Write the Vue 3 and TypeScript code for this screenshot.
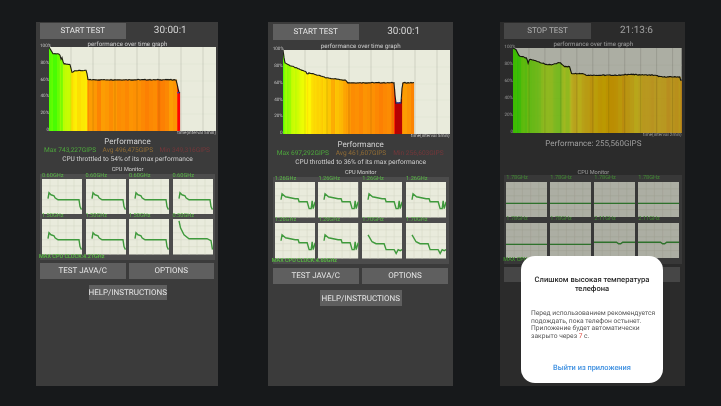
<script setup lang="ts">
type Pt = [number, number]

interface Chart {
  pts: Pt[]
  gridStep: number
  marks: Pt[]
}

interface Phone {
  id: string
  action: string
  timer: string
  chart: Chart
  interval: string
  stats?: { max: string; avg: string; min: string; note: string }
  score?: string
  freqs: string[]
  minis: string[]
  maxClock: string
  dialog?: boolean
}

const HUES: Pt[] = [[37, 0], [50, 2], [60, 31], [72, 56], [80, 76], [85, 90], [92, 100], [100, 106]]

function lerp(table: Pt[], x: number): number {
  if (x <= table[0][0]) return table[0][1]
  for (let i = 1; i < table.length; i++) {
    const [x0, y0] = table[i - 1]
    const [x1, y1] = table[i]
    if (x <= x1) return x1 === x0 ? y1 : y0 + ((y1 - y0) * (x - x0)) / (x1 - x0)
  }
  return table[table.length - 1][1]
}

function noise(n: number): number {
  const s = Math.sin(n * 12.9898) * 43758.5453
  return s - Math.floor(s) - 0.5
}

function bars(c: Chart) {
  const end = c.pts[c.pts.length - 1][0]
  const out: { x: number; y: number; h: number; fill: string }[] = []
  for (let x = 0; x < end; x++) {
    const v = lerp(c.pts, x + 0.5)
    const hue = Math.max(0, lerp(HUES, v) + noise(Math.floor(x / 4)) * 8)
    const light = v < 42 ? 36 : 50
    const h = (v / 100) * 84
    out.push({ x, y: 84 - h, h, fill: `hsl(${hue.toFixed(0)} 98% ${light}%)` })
  }
  return out
}

function outline(c: Chart): string {
  const end = c.pts[c.pts.length - 1][0]
  const out: string[] = []
  for (let x = 0; x <= end; x++) {
    const v = lerp(c.pts, x) + (x > 3 ? noise(x) * 0.9 : 0)
    out.push(`${x},${(84 - (v / 100) * 84).toFixed(1)}`)
  }
  return out.join(' ')
}

function gridX(step: number): number[] {
  const out: number[] = []
  for (let x = step; x < 167; x += step) out.push(x)
  return out
}

const a1 = '6,20 7,14 9,16 12,17 13,19 16,21 37,21 38,28 39.5,31'
const a2 = '6,2 7.5,9 11,16 16,20 34,20 38,22 39.5,31'
const b1 = '6,18 7,12 10.5,15 20,17 23,17 24,20 32,20 34,27 36,27 37,19 38,27 40,20'
const b2 = '6,12 10,19 14,21 22,21 24,27 32,27 34,31 36,27 38,28 40,27'
const c1 = '0,21.7 40,21.7'
const c2 = '0,19.5 22,19.5 24,21 26,21 28,19.5 40,19.5'

const phones: Phone[] = [
  {
    id: 'p1',
    action: 'START TEST',
    timer: '30:00:1',
    chart: {
      pts: [[0, 100], [4, 92], [9, 92], [11, 90], [11.5, 85], [13, 87], [14.5, 80], [21, 79], [23, 70], [26, 72], [37.5, 72], [39, 61], [127.5, 61], [128, 56], [130, 46], [131, 45]],
      gridStep: 22,
      marks: [[128, 45.5], [130, 45.5]]
    },
    interval: 'time(interval 5min)',
    stats: { max: 'Max 743,227GIPS', avg: 'Avg 496,475GIPS', min: 'Min 349,316GIPS', note: 'CPU throttled to 54% of its max performance' },
    freqs: ['0.60GHz', '0.60GHz', '0.60GHz', '0.60GHz', '1.50GHz', '1.50GHz', '1.50GHz', '0.50GHz'],
    minis: [a1, a1, a1, a1, a1, a1, a1, a2],
    maxClock: 'MAX CPU CLOCK:4.21GHz'
  },
  {
    id: 'p2',
    action: 'START TEST',
    timer: '30:00:1',
    chart: {
      pts: [[0, 100], [1.7, 85], [6, 82], [23, 74], [24.5, 71], [26, 73], [43, 67], [63, 64], [65, 61], [111, 61], [112.7, 37], [118.3, 37], [119.3, 61], [131, 61]],
      gridStep: 22,
      marks: [[113, 37], [118, 37]]
    },
    interval: 'time(interval 5min)',
    stats: { max: 'Max 697,292GIPS', avg: 'Avg 461,607GIPS', min: 'Min 256,603GIPS', note: 'CPU throttled to 36% of its max performance' },
    freqs: ['1.26GHz', '1.26GHz', '1.26GHz', '1.26GHz', '1.26GHz', '1.26GHz', '1.70GHz', '1.70GHz'],
    minis: [b1, b1, b1, b1, b1, b1, b2, b2],
    maxClock: 'MAX CPU CLOCK:4.60GHz'
  },
  {
    id: 'p3',
    action: 'STOP TEST',
    timer: '21:13:6',
    chart: {
      pts: [[0, 100], [3, 98], [6, 91], [13.5, 88], [15, 82], [16.5, 87], [25, 84], [31.5, 81], [38, 80], [46.5, 83], [51.5, 78], [56, 78], [58, 70], [69, 70], [73, 68], [109, 68], [111, 69], [140, 68], [147, 66], [165.5, 66], [166, 62], [167, 62]],
      gridStep: 15.8,
      marks: []
    },
    interval: 'time(interval 2min)',
    score: 'Performance: 255,560GIPS',
    freqs: ['1.78GHz', '1.78GHz', '1.78GHz', '1.78GHz', '1.78GHz', '1.78GHz', '2.11GHz', '2.11GHz'],
    minis: [c1, c1, c1, c1, c1, c1, c2, c2],
    maxClock: 'MAX CPU CLOCK:4.21GHz',
    dialog: true
  }
]

const yLabels = ['100%', '80%', '60%', '40%', '20%', '0']
</script>

<template>
  <main class="page">
    <section v-for="p in phones" :key="p.id" class="phone" :class="p.id">
      <div class="top">
        <button type="button" class="btn action">{{ p.action }}</button>
        <span class="timer">{{ p.timer }}</span>
      </div>
      <div class="graph-title">performance over time graph</div>

      <div class="graph">
        <div class="axis">
          <span v-for="l in yLabels" :key="l">{{ l }}</span>
        </div>
        <svg class="plot" viewBox="0 0 167 84" preserveAspectRatio="none">
          <rect width="167" height="84" fill="#e9ebdc" />
          <line v-for="y in [17, 34, 50, 67]" :key="y" x1="0" x2="167" :y1="y" :y2="y" stroke="#dfe1d1" stroke-width="0.5" />
          <rect
            v-for="b in bars(p.chart)"
            :key="b.x"
            :x="b.x"
            :y="b.y"
            width="1.1"
            :height="b.h"
            :fill="b.fill"
          />
          <line
            v-for="x in gridX(p.chart.gridStep)"
            :key="x"
            :x1="x"
            :x2="x"
            y1="0"
            y2="84"
            stroke="#000"
            stroke-opacity="0.14"
            stroke-width="0.8"
          />
          <polyline :points="outline(p.chart)" fill="none" stroke="#1c1c14" stroke-width="1.1" />
          <polyline
            v-if="p.chart.marks.length"
            :points="p.chart.marks.map((m) => `${m[0]},${84 - (m[1] / 100) * 84}`).join(' ')"
            fill="none"
            stroke="#3040c8"
            stroke-width="1"
          />
        </svg>
      </div>
      <div class="interval">{{ p.interval }}</div>

      <template v-if="p.stats">
        <div class="perf">Performance</div>
        <div class="stats">
          <span class="max">{{ p.stats.max }}</span>
          <span class="avg">{{ p.stats.avg }}</span>
          <span class="min">{{ p.stats.min }}</span>
        </div>
        <div class="note">{{ p.stats.note }}</div>
      </template>
      <div v-else class="score">{{ p.score }}</div>

      <div class="monitor-title">CPU Monitor</div>
      <div class="monitor">
        <div class="cells">
          <div v-for="(f, i) in p.freqs" :key="i" class="cell">
            <span class="freq">{{ f }}</span>
            <svg class="mini" viewBox="0 0 40 36" preserveAspectRatio="none">
              <rect width="40" height="36" fill="#e9ebdc" />
              <path
                d="M8 0V36M16 0V36M24 0V36M32 0V36M0 7H40M0 14H40M0 21H40M0 28H40"
                stroke="#d4d6c5"
                stroke-width="0.5"
                fill="none"
              />
              <polyline :points="p.minis[i]" fill="none" stroke="#3f9a3c" stroke-width="1.4" />
            </svg>
          </div>
        </div>
        <div class="max-clock">{{ p.maxClock }}</div>
      </div>

      <div class="row">
        <button type="button" class="btn">TEST JAVA/C</button>
        <button type="button" class="btn">OPTIONS</button>
      </div>
      <div class="help-row">
        <button type="button" class="btn help">HELP/INSTRUCTIONS</button>
      </div>

      <div v-if="p.dialog" class="backdrop">
        <div class="dialog">
          <h3>Слишком высокая температура телефона</h3>
          <p>
            Перед использованием рекомендуется<br />подождать, пока телефон остынет.<br />Приложение будет автоматически<br />закрыто
            через <em>7</em> с.
          </p>
          <a class="exit">Выйти из приложения</a>
        </div>
      </div>
    </section>
  </main>
</template>

<style scoped>
.page {
  display: flex;
  align-items: flex-start;
  width: 721px;
  height: 406px;
  padding: 22px 0 0 36px;
  box-sizing: border-box;
  font-family: Roboto, "Liberation Sans", sans-serif;
  text-rendering: geometricPrecision;
  overflow: hidden;
}

.phone {
  position: relative;
  box-sizing: border-box;
  height: 364px;
  flex: none;
  background: #3b3b3b;
  color: #d8d8d8;
  filter: blur(0.35px);
}

.p1 {
  --pad: 4px;
  --btn-w: 85.5px;
  --btn-h: 15.5px;
  --title-h: 8.5px;
  --axis: 9px;
  --plot-w: 167px;
  --plot-h: 84px;
  --cell-w: 40px;
  --cell-gap: 3.5px;
  --mini-h: 35.5px;
  --label-h: 5px;
  --panel-w: 175px;
  --row-gap: 3px;
  width: 182px;
  margin-right: 50px;
  padding: 1px 0 0 var(--pad);
}

.p2 {
  --pad: 4.7px;
  --btn-w: 86px;
  --btn-h: 16.3px;
  --title-h: 10.3px;
  --axis: 10px;
  --plot-w: 167px;
  --plot-h: 84px;
  --cell-w: 40.2px;
  --cell-gap: 3.6px;
  --mini-h: 35.5px;
  --label-h: 5.5px;
  --panel-w: 176px;
  --row-gap: 3.3px;
  width: 185px;
  margin-right: 47px;
  padding: 1.7px 0 0 var(--pad);
}

.p3 {
  --pad: 4.3px;
  --btn-w: 86.4px;
  --btn-h: 15.5px;
  --title-h: 9.5px;
  --axis: 8.7px;
  --plot-w: 168.7px;
  --plot-h: 85px;
  --cell-w: 41px;
  --cell-gap: 3px;
  --mini-h: 35.5px;
  --label-h: 5.5px;
  --panel-w: 178px;
  --row-gap: 3px;
  width: 185px;
  padding: 1px 0 0 var(--pad);
}

.top {
  display: flex;
  align-items: center;
  height: var(--btn-h);
}

.btn {
  display: block;
  border: 0;
  padding: 0;
  height: var(--btn-h);
  background: #5f5f5f;
  color: #e6e6e6;
  font: 400 8px Roboto, sans-serif;
  text-rendering: geometricPrecision;
}

.action {
  flex: none;
  width: var(--btn-w);
}

.timer {
  width: calc(var(--panel-w) - var(--btn-w));
  text-align: center;
  font-size: 10px;
  color: #d4d4d4;
}

.graph-title {
  height: var(--title-h);
  line-height: calc(var(--title-h) + 2px);
  width: var(--panel-w);
  text-align: center;
  font-size: 6.2px;
  color: #cfcfcf;
}

.graph {
  display: flex;
  height: var(--plot-h);
}

.axis {
  display: flex;
  flex-direction: column;
  justify-content: space-between;
  flex: none;
  width: var(--axis);
  font-size: 4.6px;
  text-align: right;
  color: #c8c8c8;
}

.axis span {
  line-height: 0;
}

.plot {
  display: block;
  flex: none;
  width: var(--plot-w);
  height: var(--plot-h);
}

.interval {
  width: calc(var(--axis) + var(--plot-w));
  height: 6px;
  line-height: 6px;
  text-align: right;
  font-size: 4.6px;
  color: #c8c8c8;
}

.perf {
  width: var(--panel-w);
  height: 10px;
  line-height: 10px;
  text-align: center;
  font-size: 8px;
  color: #d0d0d0;
}

.stats {
  display: flex;
  justify-content: space-between;
  box-sizing: border-box;
  width: var(--panel-w);
  height: 7.5px;
  line-height: 7.5px;
  padding: 0 5px 0 4px;
  font-size: 6.6px;
}

.max {
  color: #4da63c;
}

.avg {
  color: #8f6b35;
}

.min {
  color: #74373a;
}

.note {
  width: var(--panel-w);
  height: 8px;
  line-height: 8px;
  text-align: center;
  font-size: 6.6px;
  color: #d0d0d0;
}

.score {
  width: var(--panel-w);
  height: 10px;
  line-height: 10px;
  margin-bottom: 20px;
  text-align: center;
  font-size: 8px;
  color: #d0d0d0;
}

.monitor-title {
  margin-top: 3px;
  width: var(--panel-w);
  height: 8px;
  line-height: 8px;
  text-align: center;
  font-size: 5.6px;
  color: #cfcfcf;
}

.p3 .monitor-title {
  margin-top: 0;
  height: 6px;
}

.monitor {
  box-sizing: border-box;
  width: var(--panel-w);
  padding: 0 0 0 2px;
  background: #4c4c4c;
}

.p3 .monitor {
  padding-top: 1px;
}

.cells {
  display: grid;
  grid-template-columns: repeat(4, var(--cell-w));
  column-gap: var(--cell-gap);
}

.cell {
  display: flex;
  flex-direction: column;
}

.freq {
  height: var(--label-h);
  line-height: var(--label-h);
  font-size: 5.6px;
  color: #58b845;
}

.mini {
  display: block;
  width: var(--cell-w);
  height: var(--mini-h);
}

.max-clock {
  height: 5.5px;
  margin-left: -3px;
  line-height: 5.5px;
  font-size: 5.5px;
  font-weight: 500;
  color: #58c040;
}

.row {
  display: flex;
  gap: var(--row-gap);
  margin-top: var(--row-gap);
}

.row .btn {
  width: var(--btn-w);
}

.help-row {
  display: flex;
  justify-content: center;
  width: var(--panel-w);
  margin-top: 6px;
}

.help {
  width: 78px;
}

.p2 .help {
  width: 82px;
}

.backdrop {
  position: absolute;
  inset: 0;
  background: rgba(0, 0, 0, 0.26);
}

.dialog {
  position: absolute;
  left: 21px;
  top: 234px;
  display: flex;
  flex-direction: column;
  box-sizing: border-box;
  width: 142px;
  height: 127px;
  padding: 19px 10px 0;
  border-radius: 14px;
  background: #fff;
}

.dialog h3 {
  margin: 0;
  text-align: center;
  font-size: 7.6px;
  font-weight: 500;
  line-height: 9px;
  color: #2a2a2a;
}

.dialog p {
  margin: 17px 0 0;
  font-size: 6.7px;
  line-height: 7.6px;
  white-space: nowrap;
  color: #555;
}

.dialog em {
  font-style: normal;
  color: #e04a3f;
}

.exit {
  margin-top: 23px;
  text-align: center;
  font-size: 7.4px;
  font-weight: 500;
  color: #3d8fe0;
}
</style>

<style>
html,
body {
  background: #17191b;
}
</style>
